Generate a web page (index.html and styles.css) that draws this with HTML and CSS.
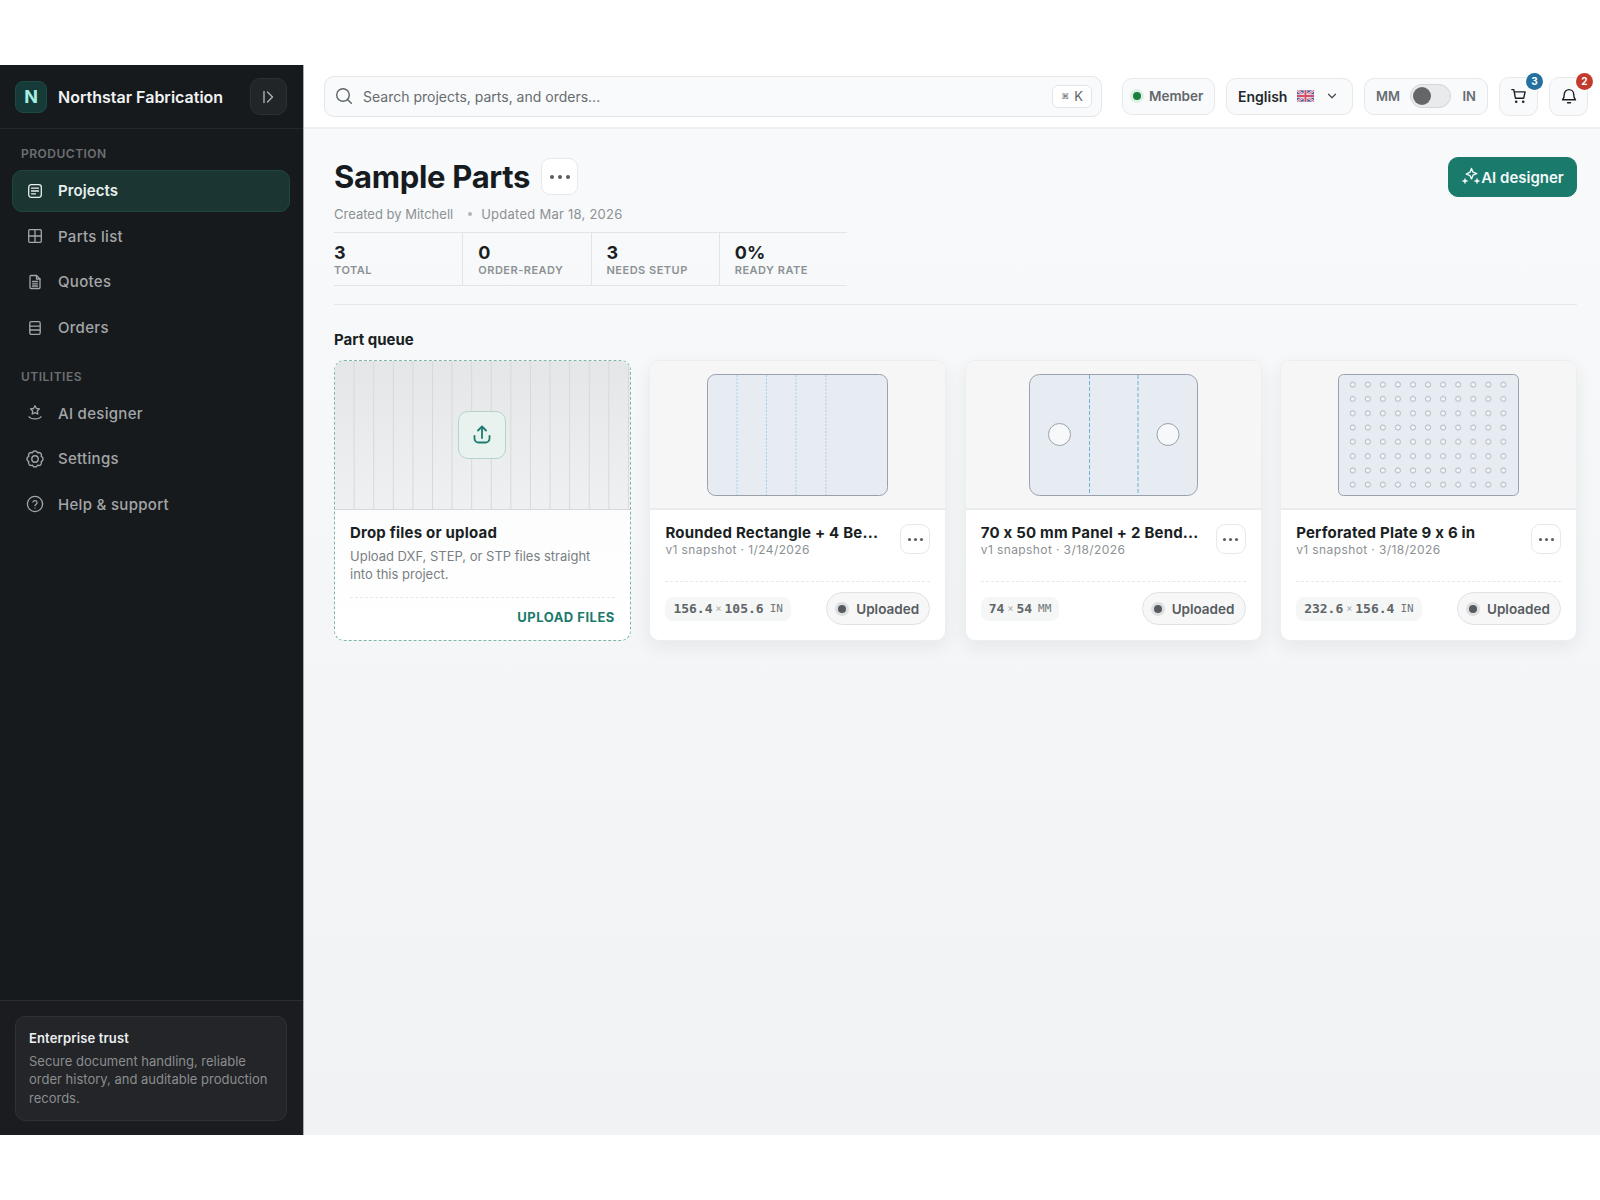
FILE: index.html
```html
<!DOCTYPE html>
<html lang="en">
<head>
    <meta charset="UTF-8">
    <meta name="viewport" content="width=device-width, initial-scale=1.0">
    <title>Sample Parts</title>
    <link rel="stylesheet" href="styles.css">
</head>
<body>
    <div class="app">
        <aside class="sidebar">
            <div class="brand">
                <div class="brand_logo">N</div>
                <div class="brand_name">Northstar Fabrication</div>
                <button class="collapse">
                    <svg width="18" height="18" viewBox="0 0 18 18" fill="none" stroke="currentColor" stroke-width="1.4" stroke-linecap="round" stroke-linejoin="round"><path d="M5 3.500v11"/><path d="M8.500 4l5 5-5 5"/></svg>
                </button>
            </div>

            <nav class="nav">
                <div class="nav_label">PRODUCTION</div>
                <a class="nav_item active">
                    <svg class="nav_icon" viewBox="0 0 16 16" fill="none" stroke="currentColor" stroke-width="1.3" stroke-linecap="round" stroke-linejoin="round"><rect x="1.700" y="1.700" width="12.600" height="12.600" rx="2.500"/><path d="M4.500 5.200h7M4.500 8h7M4.500 10.800h4"/></svg>
                    Projects
                </a>
                <a class="nav_item">
                    <svg class="nav_icon" viewBox="0 0 16 16" fill="none" stroke="currentColor" stroke-width="1.3" stroke-linejoin="round"><rect x="1.700" y="1.700" width="12.600" height="12.600" rx="1"/><path d="M8 1.700v12.600M1.700 8h12.600"/></svg>
                    Parts list
                </a>
                <a class="nav_item">
                    <svg class="nav_icon" viewBox="0 0 16 16" fill="none" stroke="currentColor" stroke-width="1.3" stroke-linecap="round" stroke-linejoin="round"><path d="M3 2.500a1 1 0 0 1 1-1h5.500L13 5v8.500a1 1 0 0 1-1 1H4a1 1 0 0 1-1-1z"/><path d="M9.500 1.500V5H13M5.500 7.500h5M5.500 9.800h5M5.500 12h5"/></svg>
                    Quotes
                </a>
                <a class="nav_item">
                    <svg class="nav_icon" viewBox="0 0 16 16" fill="none" stroke="currentColor" stroke-width="1.3" stroke-linecap="round" stroke-linejoin="round"><rect x="2.800" y="1.600" width="10.400" height="12.800" rx="1.600"/><path d="M2.800 6.200h10.400M2.800 10h10.400"/></svg>
                    Orders
                </a>

                <div class="nav_label utilities">UTILITIES</div>
                <a class="nav_item">
                    <svg class="nav_icon" viewBox="0 0 16 16" fill="none" stroke="currentColor" stroke-width="1.3" stroke-linecap="round" stroke-linejoin="round"><path d="M8 .800l1.500 2.700 3 .4-2.200 2.100.5 3L8 7.700 5.200 9l.5-3-2.200-2.100 3-.4z"/><path d="M2 11.800c1.500 2.800 10.500 2.800 12 0"/></svg>
                    AI designer
                </a>
                <a class="nav_item">
                    <svg class="nav_icon gear" viewBox="0 0 18 18" fill="none" stroke="currentColor" stroke-width="1.4" stroke-linecap="round" stroke-linejoin="round"><path d="M15.190 6.440A2.700 2.700 0 0 0 11.560 2.810 2.700 2.700 0 0 0 6.440 2.810 2.700 2.700 0 0 0 2.810 6.440 2.700 2.700 0 0 0 2.810 11.560 2.700 2.700 0 0 0 6.440 15.190 2.700 2.700 0 0 0 11.560 15.190 2.700 2.700 0 0 0 15.190 11.560 2.700 2.700 0 0 0 15.190 6.440z"/><circle cx="9" cy="9" r="3.200"/></svg>
                    Settings
                </a>
                <a class="nav_item">
                    <svg class="nav_icon gear" viewBox="0 0 18 18" fill="none" stroke="currentColor" stroke-width="1.3" stroke-linecap="round" stroke-linejoin="round"><circle cx="9" cy="9" r="7.600"/><path d="M6.900 7a2.200 2.200 0 0 1 4.200.7c0 1.400-2.100 2-2.100 3"/><path d="M9 13.100h.01"/></svg>
                    Help &amp; support
                </a>
            </nav>

            <div class="sidebar_foot">
                <div class="trust">
                    <div class="trust_title">Enterprise trust</div>
                    <div class="trust_text">Secure document handling, reliable order history, and auditable production records.</div>
                </div>
            </div>
        </aside>

        <div class="main">
            <header class="topbar">
                <div class="search">
                    <svg width="18" height="18" viewBox="0 0 18 18" fill="none" stroke="#5d6468" stroke-width="1.4" stroke-linecap="round"><circle cx="8" cy="8" r="6.300"/><path d="M12.700 12.700L16.300 16.300"/></svg>
                    <span class="search_text">Search projects, parts, and orders...</span>
                    <span class="kbd"><span class="kbd_cmd">⌘</span> K</span>
                </div>
                <div class="pill member"><span class="member_dot"></span>Member</div>
                <div class="pill lang">
                    English
                    <svg class="flag" width="17" height="12" viewBox="0 0 60 40"><rect width="60" height="40" fill="#4a5a9c"/><path d="M0 0L60 40M60 0L0 40" stroke="#f3e6ea" stroke-width="8"/><path d="M0 0L60 40M60 0L0 40" stroke="#d4506a" stroke-width="3"/><path d="M30 0v40M0 20h60" stroke="#f3e6ea" stroke-width="13"/><path d="M30 0v40M0 20h60" stroke="#d4506a" stroke-width="7"/></svg>
                    <svg class="chev" width="12" height="12" viewBox="0 0 12 12" fill="none" stroke="#4b5054" stroke-width="1.300" stroke-linecap="round" stroke-linejoin="round"><path d="M2.500 4.300L6 7.800l3.500-3.500"/></svg>
                </div>
                <div class="pill units">
                    <span>MM</span>
                    <span class="toggle"><span class="toggle_knob"></span></span>
                    <span>IN</span>
                </div>
                <button class="icon_btn">
                    <svg width="18" height="18" viewBox="0 0 18 18" fill="none" stroke="#1d2125" stroke-width="1.400" stroke-linecap="round" stroke-linejoin="round"><path d="M1.800 2.600h2l1.600 8.600h8.300l1.400-6.300H4.300"/><circle cx="6.200" cy="14.800" r=".6"/><circle cx="13.200" cy="14.800" r=".6"/></svg>
                    <span class="badge blue">3</span>
                </button>
                <button class="icon_btn">
                    <svg width="18" height="18" viewBox="0 0 18 18" fill="none" stroke="#1d2125" stroke-width="1.400" stroke-linecap="round" stroke-linejoin="round"><path d="M4.300 7.300a4.700 4.700 0 0 1 9.400 0c0 4 1.800 5.500 1.800 5.500h-13s1.800-1.500 1.800-5.500z"/><path d="M7.500 15.700h3"/></svg>
                    <span class="badge red">2</span>
                </button>
            </header>

            <div class="content">
                <div class="page_head">
                    <div>
                        <div class="title_row">
                            <h1>Sample Parts</h1>
                            <button class="more big"><span></span><span></span><span></span></button>
                        </div>
                        <div class="meta">
                            <span>Created by Mitchell</span>
                            <span class="meta_dot"></span>
                            <span class="meta_updated">Updated Mar 18, 2026</span>
                        </div>
                    </div>
                    <button class="primary">
                        <svg width="20" height="20" viewBox="0 0 20 20" fill="#f2f8f7"><path d="M10.500 1.500l1.500 3.700 3.700 1.500-3.700 1.500-1.500 3.700L9 8.700 5.300 7.200 9 5.200z" fill="none" stroke="#f2f8f7" stroke-width="1.400" stroke-linejoin="round"/><path d="M4 10.500l.9 2.600 2.600.9-2.600.9L4 17.500l-.9-2.600L.5 14l2.600-.9z"/><path d="M16 10.500l.9 2.600 2.600.9-2.600.9-.9 2.600-.9-2.600-2.600-.9 2.600-.9z"/></svg>
                        AI designer
                    </button>
                </div>

                <div class="stats">
                    <div class="stat"><b>3</b><small>TOTAL</small></div>
                    <div class="stat"><b>0</b><small>ORDER-READY</small></div>
                    <div class="stat"><b>3</b><small>NEEDS SETUP</small></div>
                    <div class="stat"><b>0%</b><small>READY RATE</small></div>
                </div>

                <div class="rule"></div>
                <h2>Part queue</h2>

                <div class="cards">
                    <div class="card upload">
                        <div class="preview stripes">
                            <div class="upload_icon">
                                <svg width="22" height="22" viewBox="0 0 22 22" fill="none" stroke="#1c7a6c" stroke-width="1.800" stroke-linecap="round" stroke-linejoin="round"><path d="M11 14V2.800"/><path d="M7 6.500l4-4 4 4"/><path d="M3.500 12v2.500a4 4 0 0 0 4 4h7a4 4 0 0 0 4-4V12"/></svg>
                            </div>
                        </div>
                        <div class="card_body">
                            <div class="upload_title">Drop files or upload</div>
                            <p class="upload_text">Upload DXF, STEP, or STP files straight into this project.</p>
                            <div class="upload_foot">UPLOAD FILES</div>
                        </div>
                    </div>

                    <div class="card">
                        <div class="preview">
                            <svg class="part" width="181" height="122" viewBox="0 0 181 122">
                                <rect class="plate" x=".5" y=".5" width="180" height="121" rx="8"/>
                                <path class="bend faint" d="M30 1v120M59.500 1v120M89 1v120M119 1v120"/>
                            </svg>
                        </div>
                        <div class="card_body">
                            <div class="card_head">
                                <div class="card_names">
                                    <div class="card_title">Rounded Rectangle + 4 Be...</div>
                                    <div class="card_sub">v1 snapshot · 1/24/2026</div>
                                </div>
                                <button class="more"><span></span><span></span><span></span></button>
                            </div>
                            <div class="card_foot">
                                <span class="dims">156.4<i>×</i>105.6<em>IN</em></span>
                                <span class="status"><span class="status_dot"></span>Uploaded</span>
                            </div>
                        </div>
                    </div>

                    <div class="card">
                        <div class="preview">
                            <svg class="part" width="169" height="122" viewBox="0 0 169 122">
                                <rect class="plate" x=".5" y=".5" width="168" height="121" rx="10"/>
                                <path class="bend" d="M60.500 1v120M109 1v120"/>
                                <circle class="hole" cx="30.500" cy="60.500" r="11"/>
                                <circle class="hole" cx="139" cy="60.500" r="11"/>
                            </svg>
                        </div>
                        <div class="card_body">
                            <div class="card_head">
                                <div class="card_names">
                                    <div class="card_title">70 x 50 mm Panel + 2 Bend...</div>
                                    <div class="card_sub">v1 snapshot · 3/18/2026</div>
                                </div>
                                <button class="more"><span></span><span></span><span></span></button>
                            </div>
                            <div class="card_foot">
                                <span class="dims">74<i>×</i>54<em>MM</em></span>
                                <span class="status"><span class="status_dot"></span>Uploaded</span>
                            </div>
                        </div>
                    </div>

                    <div class="card">
                        <div class="preview">
                            <svg class="part" width="181" height="122" viewBox="0 0 181 122">
                                <defs>
                                    <pattern id="holes" x="7.200" y="3.500" width="15.070" height="14.290" patternUnits="userSpaceOnUse">
                                        <circle class="perf" cx="7.500" cy="7.150" r="2.500"/>
                                    </pattern>
                                </defs>
                                <rect class="plate" x=".5" y=".5" width="180" height="121" rx="5"/>
                                <rect x="7.200" y="3.500" width="165.800" height="114.300" fill="url(#holes)"/>
                            </svg>
                        </div>
                        <div class="card_body">
                            <div class="card_head">
                                <div class="card_names">
                                    <div class="card_title">Perforated Plate 9 x 6 in</div>
                                    <div class="card_sub">v1 snapshot · 3/18/2026</div>
                                </div>
                                <button class="more"><span></span><span></span><span></span></button>
                            </div>
                            <div class="card_foot">
                                <span class="dims">232.6<i>×</i>156.4<em>IN</em></span>
                                <span class="status"><span class="status_dot"></span>Uploaded</span>
                            </div>
                        </div>
                    </div>
                </div>
            </div>
        </div>
    </div>
</body>
</html>
```

FILE: styles.css
```css
* {
    box-sizing: border-box;
}

body {
    margin: 0;
    padding: 65px 0;
    background: #fff;
    font-family: Inter, "Liberation Sans", sans-serif;
    font-feature-settings: "calt" 0;
    color: #1a1f23;
}

button {
    font-family: inherit;
    cursor: pointer;
}

.app {
    display: flex;
    height: 1070px;
}

/* sidebar */
.sidebar {
    width: 304px;
    flex-shrink: 0;
    display: flex;
    flex-direction: column;
    background: #171a1d;
    border-right: 1px solid #a9acaf;
}

.brand {
    height: 64px;
    display: flex;
    align-items: center;
    padding: 0 16px 0 15px;
    border-bottom: 1px solid #25282b;
}

.brand_logo {
    width: 32px;
    height: 32px;
    border-radius: 8px;
    background: #163a37;
    border: 1px solid #1d4a45;
    color: #a5f0e2;
    font-size: 18px;
    font-weight: 700;
    display: flex;
    align-items: center;
    justify-content: center;
}

.brand_name {
    flex: 1;
    margin-left: 11px;
    font-size: 16px;
    font-weight: 600;
    color: #f1f3f4;
}

.collapse {
    width: 37px;
    height: 37px;
    border-radius: 10px;
    background: #222528;
    border: 1px solid #2d3033;
    color: #aeb1b3;
    display: flex;
    align-items: center;
    justify-content: center;
    padding: 0 2px 0 0;
}

.nav {
    flex: 1;
    padding: 17px 13px 0 12px;
    display: flex;
    flex-direction: column;
    gap: 4px;
}

.nav_label {
    padding-left: 9px;
    font-size: 12px;
    line-height: 16px;
    font-weight: 600;
    letter-spacing: .5px;
    color: #6d7072;
    margin-bottom: 4px;
}

.nav_label.utilities {
    margin-top: 17px;
    margin-bottom: 3px;
}

.nav_item {
    height: 41.600px;
    display: flex;
    align-items: center;
    gap: 15px;
    padding-left: 14px;
    border: 1px solid transparent;
    border-radius: 10px;
    font-size: 15px;
    font-weight: 500;
    letter-spacing: .3px;
    color: #a3a6a8;
}

.nav_item.active {
    background: #1a3532;
    border-color: #1f4641;
    color: #e8f0ee;
    font-weight: 600;
    letter-spacing: .1px;
}

.nav_icon {
    width: 16px;
    height: 16px;
    flex-shrink: 0;
}

.nav_icon.gear {
    width: 18px;
    height: 18px;
    margin: 0 -1px;
}

.sidebar_foot {
    height: 135px;
    padding: 15px 16px 15px 15px;
    background: #1a1c1f;
    border-top: 1px solid #2a2d30;
}

.trust {
    height: 105px;
    padding: 12px 13px;
    background: #232528;
    border: 1px solid #2f3235;
    border-radius: 10px;
}

.trust_title {
    font-size: 13px;
    font-weight: 600;
    line-height: 18px;
    letter-spacing: .15px;
    color: #eceeef;
    margin-bottom: 5px;
}

.trust_text {
    font-size: 13px;
    line-height: 18.400px;
    color: #8b8d8f;
}

/* main */
.main {
    flex: 1;
    min-width: 0;
    display: flex;
    flex-direction: column;
    background: linear-gradient(#f8fafb, #f1f2f4);
}

.topbar {
    height: 64px;
    flex-shrink: 0;
    display: flex;
    align-items: center;
    padding: 0 12px 0 20px;
    background: #fff;
    border-bottom: 2px solid #eff0f1;
}

.search {
    width: 778px;
    height: 41px;
    display: flex;
    align-items: center;
    padding: 0 9px 0 10px;
    background: #f9fafb;
    border: 1px solid #e3e5e7;
    border-radius: 10px;
}

.search_text {
    flex: 1;
    margin-left: 10px;
    font-size: 14px;
    color: #666c70;
}

.kbd {
    width: 40px;
    height: 23px;
    display: flex;
    align-items: center;
    justify-content: center;
    gap: 5px;
    background: #fff;
    border: 1px solid #e3e5e7;
    border-radius: 6px;
    font-size: 13px;
    color: #5d6468;
}

.kbd_cmd {
    font-family: "DejaVu Sans", sans-serif;
    font-size: 8px;
}

.pill {
    height: 37px;
    display: flex;
    align-items: center;
    background: #f9fafb;
    border: 1px solid #e6e8ea;
    border-radius: 10px;
    font-size: 14px;
}

.member {
    width: 93px;
    margin-left: 20px;
    padding-left: 10px;
    font-size: 13.500px;
    font-weight: 600;
    color: #62686c;
}

.member_dot {
    width: 8px;
    height: 8px;
    margin-right: 8px;
    border-radius: 50%;
    background: #17803d;
    box-shadow: 0 0 0 3px #e0efe5;
}

.lang {
    width: 127px;
    margin-left: 11px;
    padding-left: 11px;
    font-weight: 600;
    color: #23282c;
}

.flag {
    margin-left: 10px;
}

.chev {
    margin-left: 12px;
}

.units {
    width: 124px;
    margin-left: 11px;
    padding: 0 11px;
    justify-content: space-between;
    font-size: 13px;
    font-weight: 600;
    color: #666c70;
}

.toggle {
    width: 41px;
    height: 24px;
    margin-right: 2px;
    padding: 2px;
    background: #e9eaeb;
    border: 1px solid #d4d6d8;
    border-radius: 12px;
}

.toggle_knob {
    display: block;
    width: 18px;
    height: 18px;
    border-radius: 50%;
    background: #63676a;
}

.icon_btn {
    position: relative;
    width: 39px;
    height: 39px;
    margin-left: 11px;
    padding: 0;
    background: #f9fafb;
    border: 1px solid #e6e8ea;
    border-radius: 10px;
    display: flex;
    align-items: center;
    justify-content: center;
}

.badge {
    position: absolute;
    top: -5px;
    right: -6px;
    width: 17px;
    height: 17px;
    border-radius: 50%;
    font-size: 10px;
    font-weight: 700;
    line-height: 17px;
    text-align: center;
    color: #fff;
    box-shadow: 0 0 0 1px #fff;
}

.badge.blue {
    background: #23719f;
}

.badge.red {
    background: #c23a2b;
}

.content {
    padding: 29px 23px 0 30px;
}

.page_head {
    display: flex;
    justify-content: space-between;
    align-items: flex-start;
}

.title_row {
    display: flex;
    align-items: center;
    gap: 11px;
    height: 37px;
}

h1 {
    margin: 0;
    font-size: 31px;
    line-height: 37px;
    font-weight: 700;
    letter-spacing: -.3px;
    color: #161b1f;
}

.more {
    width: 30px;
    height: 30px;
    flex-shrink: 0;
    padding: 0;
    background: #fff;
    border: 1px solid #e6e8ea;
    border-radius: 9px;
    display: flex;
    align-items: center;
    justify-content: center;
    gap: 3px;
}

.more span {
    width: 3px;
    height: 3px;
    border-radius: 50%;
    background: #565c60;
}

.more.big {
    width: 37px;
    height: 37px;
    gap: 4px;
}

.more.big span {
    width: 4px;
    height: 4px;
}

.meta {
    display: flex;
    align-items: center;
    margin-top: 10px;
    font-size: 13px;
    line-height: 18px;
    color: #8c9194;
}

.meta_dot {
    width: 4px;
    height: 4px;
    margin: 0 9px 0 15px;
    border-radius: 50%;
    background: #b3b6b9;
}

.meta_updated {
    letter-spacing: .25px;
}

.primary {
    width: 129px;
    height: 40px;
    margin-top: -1px;
    padding: 0;
    background: #1a7a6c;
    border: 1px solid #1a7a6c;
    border-radius: 10px;
    color: #f2f8f7;
    font-size: 15px;
    font-weight: 600;
    display: flex;
    align-items: center;
    justify-content: center;
}

.stats {
    display: flex;
    width: 513px;
    height: 54px;
    margin-top: 9px;
    border-top: 1px solid #e2e4e6;
    border-bottom: 1px solid #e2e4e6;
}

.stat {
    width: 25%;
    padding: 11px 0 0 15px;
    border-left: 1px solid #e2e4e6;
}

.stat:first-child {
    padding-left: 0;
    border-left: none;
}

.stat b {
    display: block;
    font-size: 18px;
    line-height: 18px;
    font-weight: 700;
    color: #1a1f23;
}

.stat small {
    display: block;
    margin-top: 1px;
    font-size: 11px;
    line-height: 14px;
    font-weight: 600;
    letter-spacing: .5px;
    color: #8c9194;
}

.rule {
    height: 1px;
    margin-top: 18px;
    background: #e4e6e8;
}

h2 {
    margin: 25px 0 0;
    font-size: 15px;
    line-height: 20px;
    font-weight: 700;
    color: #1a1f23;
}

.cards {
    display: grid;
    grid-template-columns: repeat(4, 1fr);
    gap: 18.500px;
    margin-top: 10px;
}

.card {
    height: 281px;
    display: flex;
    flex-direction: column;
    background: #fff;
    border: 1px solid #eceef0;
    border-radius: 10px;
    box-shadow: 0 6px 18px rgba(30, 40, 50, .07);
    overflow: hidden;
}

.preview {
    height: 149px;
    flex-shrink: 0;
    display: flex;
    align-items: center;
    justify-content: center;
    background: #f6f6f6;
    border-bottom: 2px solid #e9ebec;
}

.stripes {
    background-color: #e9eaeb;
    background-image:
        repeating-linear-gradient(90deg, transparent 0, transparent 19px, #d6d8da 19px, #d6d8da 20px),
        linear-gradient(#e5e6e7, #eff0f1);
    background-position: 0 0;
    border-bottom: 1px solid #d6d8da;
    background-size: 19.600px 100%, 100% 100%;
}

.part {
    display: block;
}

.plate {
    fill: #e7ecf3;
    stroke: #99a1ac;
    stroke-width: 1;
}

.bend {
    fill: none;
    stroke: #6fb0d6;
    stroke-width: 1;
    stroke-dasharray: 4 2;
}

.bend.faint {
    stroke: #a9cfe6;
    stroke-dasharray: 2 1.500;
}

.hole {
    fill: #f7f8fa;
    stroke: #99a1ac;
}

.perf {
    fill: #f5f7f9;
    stroke: #a5abb4;
    stroke-width: .9;
}

.card_body {
    flex: 1;
    padding: 14px 15px 15px;
    display: flex;
    flex-direction: column;
}

.card_head {
    display: flex;
    gap: 8px;
    height: 58px;
    border-bottom: 1px dashed #e6e8ea;
}

.card_names {
    flex: 1;
    min-width: 0;
}

.card_title {
    font-size: 15px;
    line-height: 18px;
    font-weight: 700;
    letter-spacing: .2px;
    color: #1a1f23;
    white-space: nowrap;
}

.card_sub {
    font-size: 12px;
    line-height: 16px;
    letter-spacing: .4px;
    color: #8c9194;
}

.card_foot {
    margin-top: auto;
    display: flex;
    align-items: center;
    justify-content: space-between;
}

.dims {
    height: 24px;
    padding: 0 8px;
    display: flex;
    align-items: center;
    background: #f5f6f6;
    border-radius: 8px;
    font-family: "DejaVu Sans Mono", monospace;
    font-size: 13px;
    font-weight: 700;
    color: #5f6569;
}

.dims i {
    margin: 0 3px;
    font-style: normal;
    font-weight: 400;
    font-size: 10px;
    color: #a9adb0;
}

.dims em {
    margin-left: 6px;
    font-style: normal;
    font-weight: 400;
    font-size: 11px;
    color: #71767a;
}

.status {
    width: 104px;
    height: 33px;
    padding-left: 11px;
    display: flex;
    align-items: center;
    background: #f7f7f8;
    border: 1px solid #dfe1e3;
    border-radius: 17px;
    font-size: 13.500px;
    font-weight: 600;
    color: #565c60;
}

.status_dot {
    width: 8px;
    height: 8px;
    margin-right: 10px;
    border-radius: 50%;
    background: #565c60;
    box-shadow: 0 0 0 3px #dedfe0;
}

/* upload card */
.upload {
    border: 1px dashed #7fb5a8;
    box-shadow: none;
    background: linear-gradient(#f9fafb, #fff);
}

.upload_icon {
    width: 48px;
    height: 48px;
    display: flex;
    align-items: center;
    justify-content: center;
    background: #e8f3f0;
    border: 1px solid #b5d3cb;
    border-radius: 10px;
}

.upload_title {
    font-size: 15px;
    line-height: 18px;
    font-weight: 700;
    letter-spacing: .2px;
    color: #1a1f23;
}

.upload_text {
    margin: 5px 0 0;
    font-size: 13px;
    line-height: 18.400px;
    color: #797f83;
}

.upload_foot {
    margin-top: 13px;
    padding-top: 10px;
    border-top: 1px dashed #e6e8ea;
    text-align: right;
    font-size: 13px;
    line-height: 18px;
    font-weight: 700;
    letter-spacing: .5px;
    color: #1c7a6c;
}
```
